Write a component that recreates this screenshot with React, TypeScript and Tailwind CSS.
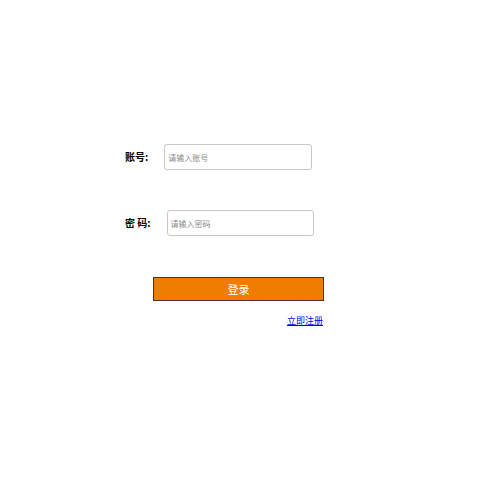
import React from 'react';

const font = { fontFamily: '"Noto Sans CJK SC", "Noto Sans", sans-serif' };

const App = () => {
  return (
    <div className="min-h-[500px] w-[500px] bg-white pl-[125px] pt-[144px]" style={font}>
      <div className="flex items-center h-[26px]">
        <label className="mr-[16px] text-[10px] font-bold text-black leading-none">账号:</label>
        <input
          type="text"
          placeholder="请输入账号"
          className="w-[148px] h-[26px] rounded-[3px] border border-[#c8c8c8] px-[3px] text-[8px] outline-none placeholder:text-[#8a8a8a]"
        />
      </div>
      <div className="mt-[40px] flex items-center h-[26px]">
        <label className="mr-[16px] text-[10px] font-bold text-black leading-none">密 码:</label>
        <input
          type="password"
          placeholder="请输入密码"
          className="w-[147px] h-[26px] rounded-[3px] border border-[#c8c8c8] px-[3px] text-[8px] outline-none placeholder:text-[#8a8a8a]"
        />
      </div>
      <button className="mt-[41px] ml-[28px] block w-[171px] h-[24px] bg-[#f07c00] border border-[#4a3520] text-white text-[11px] leading-none">
        登录
      </button>
      <div className="mt-[8px] w-[198px] text-right leading-none">
        <a href="#" className="text-[9px] text-[#0000ee] underline">立即注册</a>
      </div>
    </div>
  );
};

export default App;
